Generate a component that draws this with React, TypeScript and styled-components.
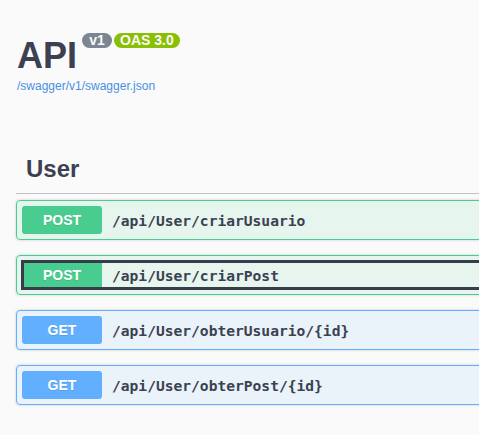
import React from 'react';
import styled, { createGlobalStyle } from 'styled-components';

const GlobalStyle = createGlobalStyle`
  html, body {
    margin: 0;
    padding: 0;
    background: #fafafa;
    overflow: hidden;
  }
  body {
    font-family: "Liberation Sans", Arial, sans-serif;
    color: #3b4151;
  }
`;

const Page = styled.div`
  width: 1000px;
  padding: 0 0 0 16px;
  box-sizing: border-box;
`;

const Info = styled.div`
  padding-top: 35px;
  padding-left: 1px;
`;

const TitleRow = styled.div`
  display: flex;
  align-items: flex-start;
  gap: 2px;
`;

const Title = styled.h2`
  margin: 0 3px 0 0;
  font-size: 36px;
  line-height: 41px;
  font-weight: 700;
  color: #3b4151;
`;

const Stamp = styled.span<{ $bg: string }>`
  display: inline-block;
  min-width: 18px;
  margin-top: -2px;
  padding: 1px 6px;
  border-radius: 57px;
  background: ${p => p.$bg};
  color: #fafafa;
  font-size: 14px;
  line-height: 13px;
  font-weight: 700;
  text-align: center;
`;

const SpecLink = styled.a`
  display: block;
  margin-top: 3px;
  font-size: 12px;
  line-height: 14px;
  color: #4990e2;
  text-decoration: none;
`;

const TagSection = styled.div`
  margin-top: 52px;
`;

const TagHeading = styled.h3`
  margin: 0 0 6px;
  padding: 10px 20px 10px 10px;
  font-size: 24px;
  line-height: 28px;
  font-weight: 700;
  border-bottom: 1px solid rgba(59, 65, 81, 0.3);
`;

const methods = {
  POST: { color: '#49cc90', bg: 'rgba(73, 204, 144, 0.1)' },
  GET: { color: '#61affe', bg: 'rgba(97, 175, 254, 0.1)' },
};

type Method = keyof typeof methods;

const OpBlock = styled.div<{ $method: Method }>`
  margin: 0 0 15px;
  border: 1px solid ${p => methods[p.$method].color};
  background: ${p => methods[p.$method].bg};
  border-radius: 4px;
  box-shadow: 0 0 3px rgba(0, 0, 0, 0.19);
`;

const Summary = styled.div<{ $focused?: boolean }>`
  display: flex;
  align-items: center;
  margin: 5px;
  outline: ${p => (p.$focused ? '3px solid #373c48' : 'none')};
  outline-offset: -2px;
`;

const MethodBadge = styled.span<{ $method: Method }>`
  min-width: 80px;
  padding: 6px 0;
  border-radius: 3px;
  background: ${p => methods[p.$method].color};
  color: #fff;
  font-size: 14px;
  line-height: 16px;
  font-weight: 700;
  text-align: center;
  text-shadow: 0 1px 0 rgba(0, 0, 0, 0.1);
`;

const Path = styled.span`
  padding: 0 10px;
  font-family: "DejaVu Sans Mono", "Liberation Mono", monospace;
  font-size: 14.6px;
  font-weight: 700;
  color: #3b4151;
`;

const ops: { method: Method; path: string; focused?: boolean }[] = [
  { method: 'POST', path: '/api/User/criarUsuario' },
  { method: 'POST', path: '/api/User/criarPost', focused: true },
  { method: 'GET', path: '/api/User/obterUsuario/{id}' },
  { method: 'GET', path: '/api/User/obterPost/{id}' },
];

const App = () => {
  return (
    <Page>
      <GlobalStyle />
      <Info>
        <TitleRow>
          <Title>API</Title>
          <Stamp $bg="#7d8492">v1</Stamp>
          <Stamp $bg="#89bf04">OAS 3.0</Stamp>
        </TitleRow>
        <SpecLink href="#">/swagger/v1/swagger.json</SpecLink>
      </Info>
      <TagSection>
        <TagHeading>User</TagHeading>
        {ops.map(op => (
          <OpBlock key={op.path} $method={op.method}>
            <Summary $focused={op.focused}>
              <MethodBadge $method={op.method}>{op.method}</MethodBadge>
              <Path>{op.path}</Path>
            </Summary>
          </OpBlock>
        ))}
      </TagSection>
    </Page>
  );
};

export default App;
